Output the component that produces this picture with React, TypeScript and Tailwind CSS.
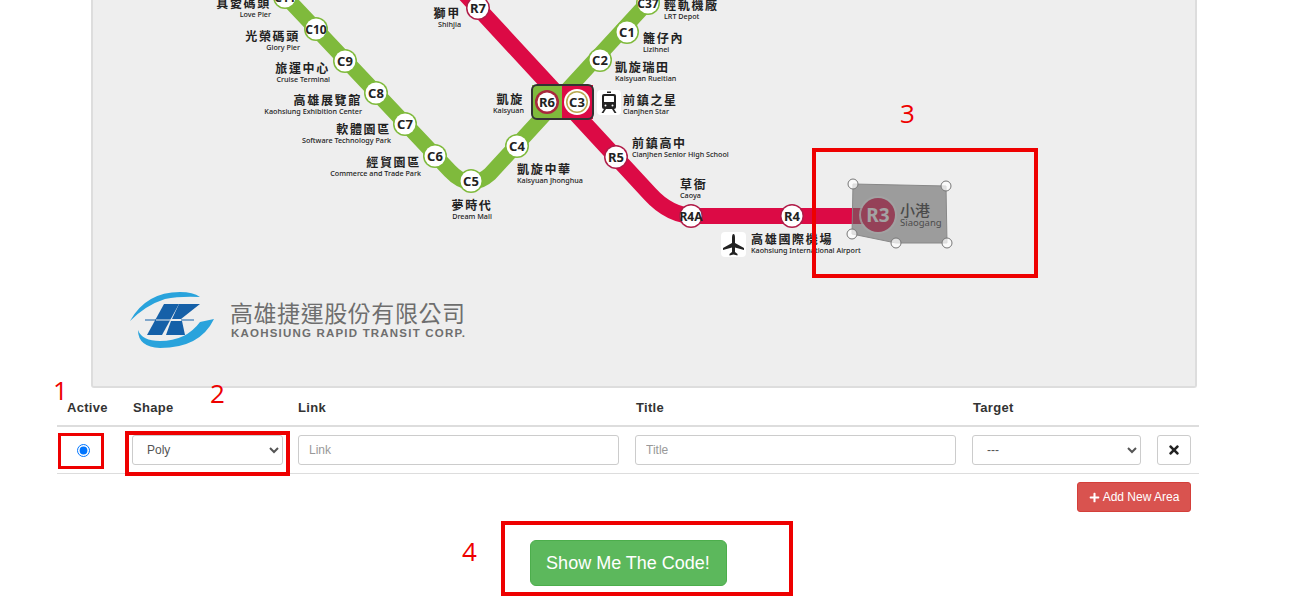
import React from 'react';
import { FaPlus, FaTimes } from 'react-icons/fa';

const GREEN = '#7fba3c';
const RED = '#dc0a45';

const stations: { id: string; x: number; y: number; line: 'g' | 'r'; small?: boolean }[] = [
  { id: 'C11', x: 285, y: -3, line: 'g', small: true },
  { id: 'C10', x: 316, y: 29, line: 'g', small: true },
  { id: 'C9', x: 345, y: 61, line: 'g' },
  { id: 'C8', x: 376, y: 93, line: 'g' },
  { id: 'C7', x: 405, y: 124, line: 'g' },
  { id: 'C6', x: 435, y: 156, line: 'g' },
  { id: 'C5', x: 471, y: 181, line: 'g' },
  { id: 'C4', x: 517, y: 146, line: 'g' },
  { id: 'C2', x: 600, y: 60, line: 'g' },
  { id: 'C1', x: 627, y: 32, line: 'g' },
  { id: 'C37', x: 648, y: 3, line: 'g', small: true },
  { id: 'R7', x: 478, y: 8, line: 'r' },
  { id: 'R5', x: 616, y: 157, line: 'r' },
  { id: 'R4A', x: 691, y: 216, line: 'r', small: true },
  { id: 'R4', x: 792, y: 216, line: 'r' },
];

const labels: { zh: string; en: string; x: number; y: number; anchor?: 'start' | 'middle' | 'end' }[] = [
  { zh: '真愛碼頭', en: 'Love Pier', x: 271, y: 8, anchor: 'end' },
  { zh: '光榮碼頭', en: 'Glory Pier', x: 300, y: 41, anchor: 'end' },
  { zh: '旅運中心', en: 'Cruise Terminal', x: 330, y: 73, anchor: 'end' },
  { zh: '高雄展覽館', en: 'Kaohsiung Exhibition Center', x: 362, y: 105, anchor: 'end' },
  { zh: '軟體園區', en: 'Software Technology Park', x: 391, y: 134, anchor: 'end' },
  { zh: '經貿園區', en: 'Commerce and Trade Park', x: 421, y: 167, anchor: 'end' },
  { zh: '夢時代', en: 'Dream Mall', x: 472, y: 210, anchor: 'middle' },
  { zh: '獅甲', en: 'Shihjia', x: 461, y: 18, anchor: 'end' },
  { zh: '凱旋', en: 'Kaisyuan', x: 524, y: 104, anchor: 'end' },
  { zh: '凱旋中華', en: 'Kaisyuan Jhonghua', x: 517, y: 174 },
  { zh: '凱旋瑞田', en: 'Kaisyuan Rueitian', x: 615, y: 72 },
  { zh: '籬仔內', en: 'Lizihnei', x: 643, y: 43 },
  { zh: '輕軌機廠', en: 'LRT Depot', x: 664, y: 10 },
  { zh: '前鎮之星', en: 'Cianjhen Star', x: 623, y: 105 },
  { zh: '前鎮高中', en: 'Cianjhen Senior High School', x: 632, y: 148 },
  { zh: '草衙', en: 'Caoya', x: 680, y: 189 },
  { zh: '高雄國際機場', en: 'Kaohsiung International Airport', x: 751, y: 244 },
];

const MetroMap: React.FC = () => (
  <svg viewBox="93 0 1102 386" className="block w-full h-full font-['Noto_Sans','Noto_Sans_CJK_TC',sans-serif]">
    <path d="M266 -24 L450 171 Q470 192 490 174 L660 -11" fill="none" stroke={GREEN} strokeWidth="15" />
    <path d="M465 -6 L650 194 Q670 216 695 216 L878 216" fill="none" stroke={RED} strokeWidth="16" />

    {/* interchange box */}
    <rect x="532" y="85" width="31" height="34" fill={GREEN} />
    <rect x="562" y="85" width="31" height="34" fill={RED} />
    <rect x="532" y="85" width="61" height="34" rx="5" fill="none" stroke="#333" strokeWidth="2" />
    <circle cx="547" cy="102" r="12" fill="#a8283c" />
    <circle cx="547" cy="102" r="9.5" fill="#fff" />
    <circle cx="577" cy="102" r="13" fill="#fff" />
    <circle cx="577" cy="102" r="11" fill="#b9a84e" />
    <circle cx="577" cy="102" r="9.5" fill="#fff" />
    <text x="547" y="106.5" textAnchor="middle" className="text-[13px] font-bold fill-[#222]">R6</text>
    <text x="577" y="106.5" textAnchor="middle" className="text-[13px] font-bold fill-[#222]">C3</text>

    {stations.map((s) => (
      <g key={s.id}>
        <circle cx={s.x} cy={s.y} r="12" fill={s.line === 'g' ? GREEN : '#b01c48'} />
        <circle cx={s.x} cy={s.y} r="10.5" fill="#fff" />
        <text
          x={s.x}
          y={s.y + 4.5}
          textAnchor="middle"
          className={s.small ? 'text-[12px] font-bold fill-[#222]' : 'text-[13px] font-bold fill-[#222]'}
        >
          {s.id}
        </text>
      </g>
    ))}

    {labels.map((l) => (
      <g key={l.en} textAnchor={l.anchor || 'start'}>
        <text x={l.x} y={l.y} className="text-[12px] font-bold tracking-[1.7px] fill-[#222]">{l.zh}</text>
        <text x={l.x} y={l.y + 9} className="text-[7.2px] font-medium fill-[#222]">{l.en}</text>
      </g>
    ))}

    {/* train icon */}
    <rect x="597" y="90" width="24" height="25" rx="4" fill="#fff" />
    <g fill="#222">
      <path d="M604 94 h10 a2 2 0 0 1 2 2 v11 a2 2 0 0 1 -2 2 h-10 a2 2 0 0 1 -2 -2 v-11 a2 2 0 0 1 2 -2 z" />
      <rect x="607" y="91.5" width="4" height="1.5" />
      <path d="M604 109 h2 l-2.5 4 h-2 z M614 109 h-2 l2.5 4 h2 z" />
    </g>
    <rect x="604" y="96" width="10" height="6" rx="0.5" fill="#fff" />
    <circle cx="605.5" cy="105.5" r="1" fill="#fff" />
    <circle cx="612.5" cy="105.5" r="1" fill="#fff" />

    {/* airplane icon */}
    <rect x="721" y="232" width="25" height="25" rx="4" fill="#fff" />
    <path
      d="M733.5 234 q1.5 0 1.5 4 v5 l9 5 v2 l-9 -2.5 v4.5 l2.5 2 v1.5 l-4 -1 l-4 1 v-1.5 l2.5 -2 v-4.5 l-9 2.5 v-2 l9 -5 v-5 q0 -4 1.5 -4 z"
      fill="#222"
    />

    {/* Kaohsiung Rapid Transit logo */}
    <path d="M130 321 Q146 292 180 292 Q193 292 200 297 Q180 296 165 299 Q146 305 130 321 z" fill="#29a3dc" />
    <path d="M214 319 Q200 348 160 348 Q138 347 138 330 Q142 341 160 341 Q186 341 200 322 z" fill="#29a3dc" />
    <path d="M164 304 H179 L162 335 H147 z" fill="#1560a8" />
    <path d="M179 304 H200 L181 319 H172 z M171 321 H182 L185 335 H166 z" fill="#1560a8" />
    <rect x="145" y="319.5" width="11" height="1" fill="#1560a8" />
    <rect x="156" y="319.5" width="17" height="1" fill="#eeeeee" />
    <rect x="181" y="319.5" width="13" height="1" fill="#1560a8" />
    <text x="230" y="322" textLength="235" className="text-[23px] fill-[#6e6e6e]">高雄捷運股份有限公司</text>
    <text x="231" y="337" textLength="234" className="text-[11.5px] font-bold fill-[#6e6e6e] font-['Liberation_Sans',sans-serif]">
      KAOHSIUNG RAPID TRANSIT CORP.
    </text>

    {/* active area being edited */}
    <circle cx="878" cy="215" r="19" fill="#fff" fillOpacity="0.8" />
    <circle cx="878" cy="215" r="17" fill={RED} />
    <text x="878" y="221.5" textAnchor="middle" className="text-[19px] font-bold fill-white">R3</text>
    <text x="900" y="216" className="text-[15px] font-medium fill-[#222]">小港</text>
    <text x="900" y="226" className="text-[9.5px] fill-[#222]">Siaogang</text>
    <polygon
      points="853,184 946,186 947,243 896,243 852,234"
      fill="#666"
      fillOpacity="0.6"
      stroke="#888"
      strokeWidth="1"
    />
    {[[853, 184], [946, 186], [947, 243], [896, 243], [852, 234]].map(([x, y]) => (
      <circle key={x} cx={x} cy={y} r="5" fill="#fff" fillOpacity="0.7" stroke="#777" strokeWidth="1" />
    ))}
  </svg>
);

const fieldClass =
  "block w-full h-[30px] px-[10px] text-[12px] text-[#555] bg-white border border-[#ccc] rounded-[3px] font-['Liberation_Sans',sans-serif] placeholder:text-[#999]";
const headClass = 'px-2 pt-[10px] pb-[7px] text-left text-[13px] leading-[20px] font-bold tracking-[0.3px] text-[#333]';

const AreaTable: React.FC = () => (
  <table className="w-[1142px] table-fixed border-collapse font-['Liberation_Sans',sans-serif]">
    <colgroup>
      <col className="w-[68px]" />
      <col className="w-[165px]" />
      <col className="w-[337px]" />
      <col className="w-[337px]" />
      <col className="w-[185px]" />
      <col className="w-[50px]" />
    </colgroup>
    <thead>
      <tr className="border-b-2 border-[#ddd]">
        <th className={`${headClass} pl-[10px]`}>Active</th>
        <th className={headClass}>Shape</th>
        <th className={headClass}>Link</th>
        <th className={`${headClass} pl-[9px]`}>Title</th>
        <th className={`${headClass} pl-[9px]`}>Target</th>
        <th />
      </tr>
    </thead>
    <tbody>
      <tr className="border-b border-[#ddd]">
        <td className="py-2">
          <input type="radio" defaultChecked className="block ml-[20px] w-[13px] h-[13px]" />
        </td>
        <td className="py-2 px-[7px]">
          <select className={fieldClass} defaultValue="Poly">
            <option>Poly</option>
            <option>Rect</option>
            <option>Circle</option>
          </select>
        </td>
        <td className="py-2 px-2">
          <input className={fieldClass} placeholder="Link" />
        </td>
        <td className="py-2 px-2">
          <input className={fieldClass} placeholder="Title" />
        </td>
        <td className="py-2 px-2">
          <select className={fieldClass} defaultValue="---">
            <option>---</option>
            <option>_blank</option>
          </select>
        </td>
        <td className="py-2 px-2">
          <button className="flex items-center justify-center w-[34px] h-[30px] bg-white border border-[#ccc] rounded-[3px] text-[#222]">
            <FaTimes className="w-[14px] h-[14px]" />
          </button>
        </td>
      </tr>
    </tbody>
  </table>
);

export default function App() {
  return (
    <div className="relative w-[1293px] h-[611px] overflow-hidden bg-white">
      <div className="flex flex-col w-[1142px] ml-[57px]">
        <div className="ml-[34px] w-[1106px] h-[388px] bg-[#eeeeee] border-2 border-t-0 border-[#dddddd] rounded-b-[3px]">
          <MetroMap />
        </div>
        <AreaTable />
        <div className="flex justify-end pr-2 mt-2">
          <button className="flex items-center justify-center gap-[3px] w-[114px] h-[30px] bg-[#d9534f] border border-[#d43f3a] rounded-[3px] text-white text-[12px] font-['Liberation_Sans',sans-serif]">
            <FaPlus className="w-[11px] h-[11px]" />
            Add New Area
          </button>
        </div>
        <div className="flex justify-center mt-7">
          <button className="w-[197px] h-[46px] bg-[#5cb85c] border border-[#4cae4c] rounded-[6px] text-white text-[18px] font-['Liberation_Sans',sans-serif]">
            Show Me The Code!
          </button>
        </div>
      </div>

      {/* red annotations drawn over the form */}
      <div className="absolute left-[58px] top-[433px] w-[46px] h-[36px] border-[3px] border-[#ee0000]" />
      <div className="absolute left-[125px] top-[431px] w-[165px] h-[45px] border-[4px] border-[#ee0000]" />
      <div className="absolute left-[812px] top-[148px] w-[226px] h-[130px] border-[4px] border-[#ee0000]" />
      <div className="absolute left-[501px] top-[521px] w-[292px] h-[75px] border-[4px] border-[#ee0000]" />
      <span className="absolute left-[53px] top-[375px] text-[26px] leading-[30px] text-[#ee0000] font-['Open_Sans',sans-serif]">1</span>
      <span className="absolute left-[210px] top-[378px] text-[26px] leading-[30px] text-[#ee0000] font-['Open_Sans',sans-serif]">2</span>
      <span className="absolute left-[900px] top-[98px] text-[26px] leading-[30px] text-[#ee0000] font-['Open_Sans',sans-serif]">3</span>
      <span className="absolute left-[462px] top-[536px] text-[26px] leading-[30px] text-[#ee0000] font-['Open_Sans',sans-serif]">4</span>
    </div>
  );
}
